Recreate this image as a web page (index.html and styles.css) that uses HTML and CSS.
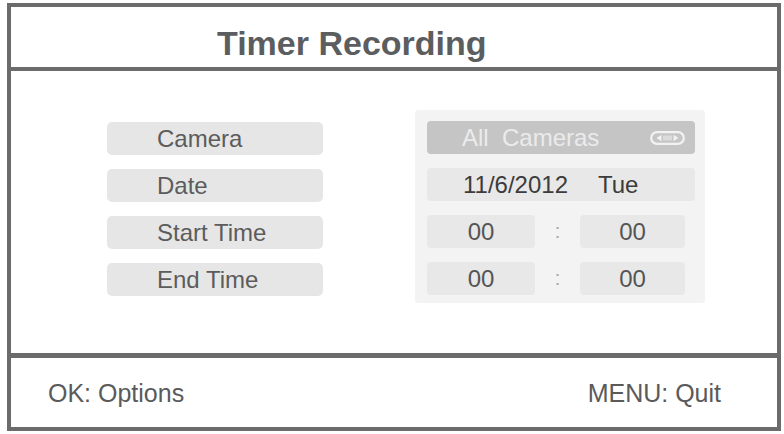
FILE: index.html
```html
<!DOCTYPE html>
<html>
<head>
<meta charset="utf-8">
<link rel="stylesheet" href="styles.css">
</head>
<body>
<div class="screen">
  <header class="title-bar">
    <h1 class="title">Timer Recording</h1>
  </header>
  <main class="body">
    <div class="labels">
      <div class="label">Camera</div>
      <div class="label">Date</div>
      <div class="label">Start Time</div>
      <div class="label">End Time</div>
    </div>
    <div class="panel">
      <div class="field field-camera">
        <span class="camera-text">All&nbsp; Cameras</span>
        <svg class="cam-icon" width="35" height="14" viewBox="0 0 35 14">
          <rect x="1.2" y="1.2" width="32.6" height="11.6" rx="5.8" fill="none" stroke="#f2f2f2" stroke-width="2.2"/>
          <path d="M6.5 7 L11.5 3.8 L11.5 10.2 Z" fill="#f2f2f2"/>
          <rect x="13" y="4.5" width="9" height="5" rx="1" fill="#dcdcdc"/>
          <path d="M28.5 7 L23.5 3.8 L23.5 10.2 Z" fill="#f2f2f2"/>
        </svg>
      </div>
      <div class="field field-date">
        <span class="date">11/6/2012</span>
        <span class="day">Tue</span>
      </div>
      <div class="time-row">
        <div class="field time-h">00</div>
        <span class="colon">:</span>
        <div class="field time-m">00</div>
      </div>
      <div class="time-row">
        <div class="field time-h">00</div>
        <span class="colon">:</span>
        <div class="field time-m">00</div>
      </div>
    </div>
  </main>
  <footer class="footer">
    <span class="hint">OK: Options</span>
    <span class="hint">MENU: Quit</span>
  </footer>
</div>
</body>
</html>
```
FILE: styles.css
```css
* { box-sizing: border-box; }
html, body { margin: 0; padding: 0; background: #ffffff; }
body {
  font-family: "Liberation Sans", Arial, sans-serif;
  width: 784px;
  height: 434px;
  overflow: hidden;
}
.screen {
  margin: 3px 0 0 7px;
  width: 774px;
  height: 428px;
  border: 4px solid #6b6b6b;
  display: flex;
  flex-direction: column;
}
.title-bar {
  height: 64px;
  border-bottom: 4px solid #6b6b6b;
  padding: 12px 0 0 206px;
}
.title {
  margin: 0;
  font-size: 34px;
  line-height: 48px;
  font-weight: bold;
  color: #5c5d5f;
}
.body {
  height: 287px;
  border-bottom: 5px solid #6b6b6b;
  display: flex;
  align-items: flex-start;
  padding: 39px 0 0 96px;
}
.labels {
  margin-top: 12px;
  width: 216px;
  display: flex;
  flex-direction: column;
  gap: 14px;
}
.label {
  height: 33px;
  background: #e6e6e6;
  border-radius: 5px;
  padding-left: 50px;
  font-size: 24px;
  line-height: 33px;
  color: #5c5c5c;
}
.panel {
  margin-left: 92px;
  width: 290px;
  background: #f3f3f3;
  border-radius: 4px;
  padding: 11px 10px 8px 12px;
  display: flex;
  flex-direction: column;
  gap: 14px;
}
.field {
  height: 33px;
  border-radius: 4px;
  background: #e8e8e8;
  font-size: 24px;
  line-height: 33px;
  color: #555555;
}
.field-camera {
  background: #c5c5c5;
  color: #ebebeb;
  display: flex;
  align-items: center;
  padding-left: 35px;
  padding-right: 10px;
}
.camera-text { flex: 1; }
.cam-icon { display: block; }
.field-date {
  display: flex;
  padding-left: 36px;
  color: #3c3c3c;
}
.day { margin-left: 30px; }
.time-row {
  display: flex;
  align-items: center;
}
.time-h {
  width: 108px;
  text-align: center;
}
.colon {
  width: 45px;
  text-align: center;
  font-size: 20px;
  color: #a8a8a8;
}
.time-m {
  width: 105px;
  text-align: center;
}
.footer {
  flex: 1;
  display: flex;
  align-items: center;
  justify-content: space-between;
  padding: 2px 56px 0 37px;
}
.hint {
  font-size: 25px;
  color: #5a5a5a;
}
```
